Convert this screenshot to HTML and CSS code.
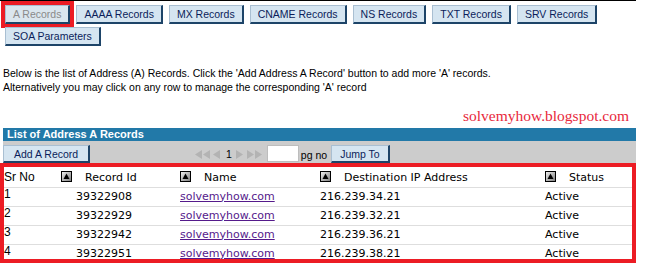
FILE: index.html
```html
<!DOCTYPE html>
<html lang="en">
<head>
    <meta charset="UTF-8">
    <title>Address A Records</title>
    <link rel="stylesheet" href="styles.css">
</head>
<body>
    <div class="rule"></div>

    <div class="tabs">
        <span class="tab tab-active">A Records</span>
        <span class="tab">AAAA Records</span>
        <span class="tab">MX Records</span>
        <span class="tab">CNAME Records</span>
        <span class="tab">NS Records</span>
        <span class="tab">TXT Records</span>
        <span class="tab">SRV Records</span>
        <span class="tab">SOA Parameters</span>
    </div>

    <p class="intro">
        Below is the list of Address (A) Records. Click the 'Add Address A Record' button to add more 'A' records.<br>
        Alternatively you may click on any row to manage the corresponding 'A' record
    </p>

    <div class="credit">solvemyhow.blogspot.com</div>

    <div class="panel">
        <div class="panel-title">List of Address A Records</div>

        <div class="toolbar">
            <span class="btn btn-add">Add A Record</span>
            <div class="pager">
                <svg class="arrow" width="15" height="9" viewBox="0 0 15 9"><polygon points="7,0 0,4.5 7,9"/><polygon points="15,0 8,4.5 15,9"/></svg>
                <svg class="arrow" width="10" height="9" viewBox="0 0 10 9"><polygon points="8,0 1,4.5 8,9"/></svg>
                <span class="page-num">1</span>
                <svg class="arrow" width="10" height="9" viewBox="0 0 10 9"><polygon points="1,0 8,4.5 1,9"/></svg>
                <svg class="arrow" width="16" height="9" viewBox="0 0 16 9"><polygon points="0,0 7,4.5 0,9"/><polygon points="8,0 15,4.5 8,9"/></svg>
                <span class="page-input"></span>
                <span class="pg-label">pg no</span>
                <span class="btn btn-jump">Jump To</span>
            </div>
        </div>

        <div class="records">
            <table class="grid">
                <colgroup>
                    <col class="c-sr"><col class="c-id"><col class="c-name"><col class="c-ip"><col class="c-status">
                </colgroup>
                <thead>
                    <tr>
                        <th class="sr">Sr No</th>
                        <th><span class="sort"><svg width="11" height="11" viewBox="0 0 11 11"><defs><linearGradient id="g" x1="0" y1="0" x2="1" y2="1"><stop offset="0" stop-color="#f4f4f4"/><stop offset="1" stop-color="#7a7a7a"/></linearGradient></defs><rect x="0.5" y="0.5" width="10" height="10" fill="url(#g)" stroke="#000"/><polygon points="5.5,2.5 2.5,8 8.5,8" fill="#000"/></svg></span>Record Id</th>
                        <th><span class="sort"><svg width="11" height="11" viewBox="0 0 11 11"><rect x="0.5" y="0.5" width="10" height="10" fill="url(#g)" stroke="#000"/><polygon points="5.5,2.5 2.5,8 8.5,8" fill="#000"/></svg></span>Name</th>
                        <th><span class="sort"><svg width="11" height="11" viewBox="0 0 11 11"><rect x="0.5" y="0.5" width="10" height="10" fill="url(#g)" stroke="#000"/><polygon points="5.5,2.5 2.5,8 8.5,8" fill="#000"/></svg></span>Destination IP Address</th>
                        <th><span class="sort"><svg width="11" height="11" viewBox="0 0 11 11"><rect x="0.5" y="0.5" width="10" height="10" fill="url(#g)" stroke="#000"/><polygon points="5.5,2.5 2.5,8 8.5,8" fill="#000"/></svg></span>Status</th>
                    </tr>
                </thead>
                <tbody>
                    <tr><td class="sr">1</td><td class="rid">39322908</td><td><a href="#">solvemyhow.com</a></td><td>216.239.34.21</td><td>Active</td></tr>
                    <tr><td class="sr">2</td><td class="rid">39322929</td><td><a href="#">solvemyhow.com</a></td><td>216.239.32.21</td><td>Active</td></tr>
                    <tr><td class="sr">3</td><td class="rid">39322942</td><td><a href="#">solvemyhow.com</a></td><td>216.239.36.21</td><td>Active</td></tr>
                    <tr><td class="sr">4</td><td class="rid">39322951</td><td><a href="#">solvemyhow.com</a></td><td>216.239.38.21</td><td>Active</td></tr>
                </tbody>
            </table>
        </div>
    </div>
</body>
</html>
```

FILE: styles.css
```css
* {
    box-sizing: border-box;
}

body {
    margin: 0;
    font-family: "Liberation Sans", Arial, sans-serif;
    font-size: 10.5px;
    color: #000;
    background: #fff;
}

.rule {
    width: 636px;
    height: 1px;
    background: #000;
}

/* record type tabs */
.tabs {
    display: flex;
    flex-wrap: wrap;
    gap: 3px 6px;
    width: 615px;
    padding: 4px 0 0 5px;
}

.tab,
.btn {
    display: inline-block;
    height: 19px;
    line-height: 17px;
    padding: 0 7px;
    background: #d5e5f1;
    border: 1px solid #a9bfd2;
    border-right: 2px solid #1d4468;
    border-bottom: 2px solid #1d4468;
    color: #0b1d5a;
    white-space: nowrap;
}

.tab-active {
    color: #8a8a8a;
    background: #dbe6ee;
    outline: 4px solid #ec1c24;
}

.intro {
    margin: 20px 0 0;
    padding-left: 3px;
    line-height: 14px;
}

.credit {
    margin-top: 13px;
    padding-right: 7px;
    width: 636px;
    text-align: right;
    font-family: "Liberation Serif", "Times New Roman", serif;
    font-size: 15.5px;
    line-height: 18px;
    color: #e8283c;
}

/* list panel */
.panel {
    width: 633px;
    margin: 3px 0 0 3px;
}

.panel-title {
    height: 13px;
    line-height: 13px;
    padding-left: 4px;
    background: #2279a8;
    color: #fff;
    font-size: 11px;
    font-weight: bold;
}

.toolbar {
    display: flex;
    align-items: flex-end;
    height: 22px;
    background: #cccccc;
}

.btn-add {
    width: 87px;
    height: 18px;
    padding-left: 10px;
}

.pager {
    display: flex;
    align-items: flex-end;
    margin-left: 105px;
}

.arrow {
    fill: #b3b3b3;
    margin: 0 2px 4px 0;
}

.page-num {
    margin: 0 3px 2px 2px;
    line-height: 13px;
}

.page-input {
    width: 32px;
    height: 17px;
    margin: 0 2px 1px 2px;
    background: #fff;
    border: 1px solid #bdbdbd;
}

.pg-label {
    margin: 0 4px 1px 0;
    line-height: 13px;
}

.btn-jump {
    width: 59px;
    height: 18px;
    padding: 0 0 0 8px;
}

/* records table with the annotation frame laid over it */
.records {
    position: relative;
}

.records::after {
    content: "";
    position: absolute;
    left: -3px;
    top: 0;
    right: 0;
    bottom: 0;
    border: 4px solid #ec1c24;
}

.grid {
    width: 633px;
    table-layout: fixed;
    border-collapse: collapse;
    font-family: "DejaVu Sans", Verdana, sans-serif;
    font-size: 11px;
}

.c-sr { width: 55px; }
.c-id { width: 120px; }
.c-name { width: 140px; }
.c-ip { width: 225px; }
.c-status { width: 93px; }

.grid th {
    height: 24px;
    padding: 8px 0 0 2px;
    text-align: left;
    vertical-align: top;
    font-weight: normal;
    line-height: 13px;
    white-space: nowrap;
}

.grid th:nth-child(2) {
    padding-left: 3px;
}

.sort {
    display: inline-block;
    width: 11px;
    height: 11px;
    margin-right: 13px;
    vertical-align: top;
}

.sort svg {
    display: block;
}

.grid td {
    height: 19px;
    padding: 0 0 0 2px;
    border-top: 1px solid #dedede;
    line-height: 18px;
    white-space: nowrap;
}

.grid .sr {
    padding-left: 1px;
    font-family: "Liberation Sans", Arial, sans-serif;
    font-size: 12px;
}

.grid th.sr {
    padding-top: 7px;
    line-height: 14px;
}

.grid td.sr {
    vertical-align: top;
    line-height: 12px;
}

.grid td.rid {
    padding-left: 18px;
}

.grid a {
    color: #551a8b;
}
```
